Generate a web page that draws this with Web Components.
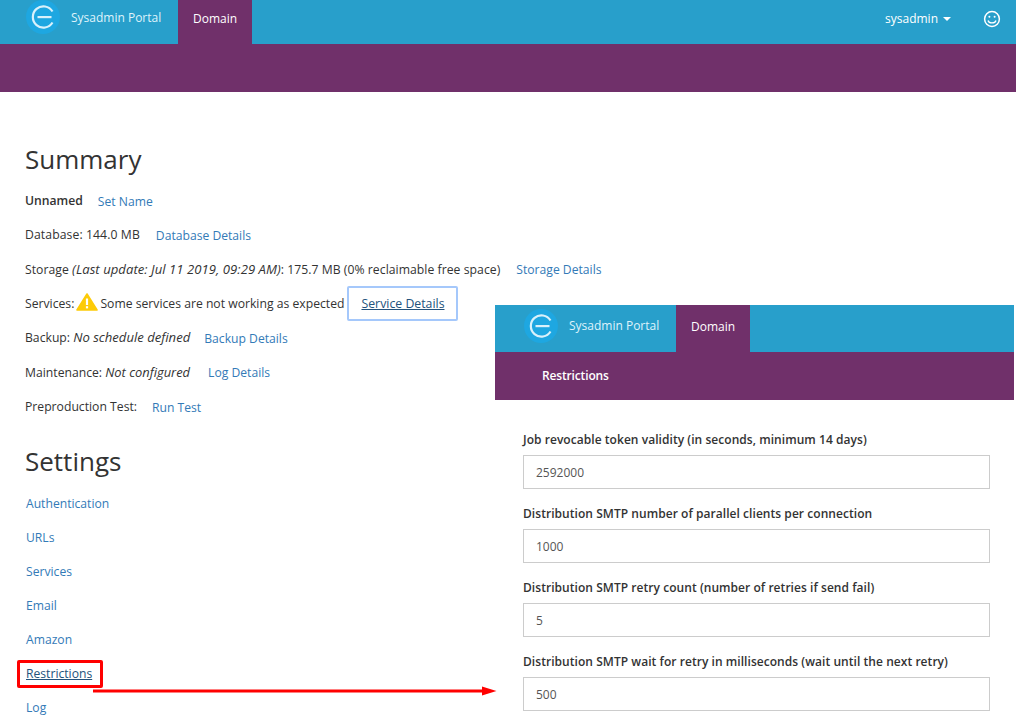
<!DOCTYPE html>
<html>
<head>
<meta charset="utf-8">
<title>Sysadmin Portal</title>
<style>
html, body { margin: 0; height: 725px; overflow: hidden; background: #fff; }
body { font-family: "Open Sans", sans-serif; font-size: 12px; color: #333; position: relative; }
</style>
</head>
<body>
<template id="portal-header-template">
  <style>
    :host { display: block; font-family: "Open Sans", sans-serif; }
    .top { display: flex; height: 44px; background: #289fcb; color: #fff; }
    .logo { width: 34px; height: 34px; margin: 0 0 10px 26px; flex: none; }
    .name { margin-left: 11px; padding-top: 10px; font-size: 12px; line-height: 16px; color: #dff3fb; width: 107px; white-space: nowrap; }
    .tab { width: 74px; background: #70306a; font-size: 12px; line-height: 17px; padding-top: 10px; text-align: center; box-sizing: border-box; }
    .right { margin-left: auto; display: flex; }
    .sub { height: 48px; background: #70306a; color: #fff; font-size: 12px; line-height: 48px; padding-left: 47px; font-weight: 600; letter-spacing: -0.15px; }
    :host([compact]) .top { height: 47px; }
    :host([compact]) .logo { margin-left: 29px; margin-top: 4px; margin-bottom: 9px; }
    :host([compact]) .name { padding-top: 13px; }
    :host([compact]) .tab { padding-top: 13px; }
  </style>
  <div class="top">
    <svg class="logo" viewBox="0 0 34 34">
      <circle cx="17" cy="17" r="17" fill="#1ea7e1"/>
      <path d="M26.5 11.5A10.6 10.6 0 1 0 26.5 22.5" fill="none" stroke="#d9f1fb" stroke-width="2.2"/>
      <rect x="11.5" y="16" width="14" height="2.2" fill="#d9f1fb"/>
    </svg>
    <span class="name">Sysadmin Portal</span>
    <span class="tab">Domain</span>
    <div class="right"><slot name="right"></slot></div>
  </div>
  <div class="sub"><slot></slot></div>
</template>

<template id="user-menu-template">
  <style>
    :host { display: flex; height: 44px; font-family: "Open Sans", sans-serif; color: #fff; font-size: 12px; }
    .user { margin-top: 10px; line-height: 17px; }
    .caret { display: inline-block; width: 0; height: 0; border: 4px solid transparent; border-top-color: #fff; border-bottom: 0; margin-left: 5px; vertical-align: 2px; }
    svg { width: 18px; height: 18px; margin: 10px 15px 0 32px; }
  </style>
  <span class="user">sysadmin<span class="caret"></span></span>
  <svg viewBox="0 0 18 18" fill="none" stroke="#fff" stroke-width="1.5">
    <circle cx="9" cy="9" r="7.4"/>
    <circle cx="6.4" cy="6.8" r="1" fill="#fff" stroke="none"/>
    <circle cx="11.6" cy="6.8" r="1" fill="#fff" stroke="none"/>
    <path d="M5 10.5c1 3.2 7 3.2 8 0" stroke-width="1.3"/>
  </svg>
</template>

<template id="info-row-template">
  <style>
    :host { display: flex; align-items: center; height: 34.33px; font-family: "Open Sans", sans-serif; font-size: 12.2px; color: #333; white-space: nowrap; }
  </style>
  <slot></slot>
</template>

<template id="summary-panel-template">
  <style>
    :host { display: block; padding: 49px 0 0 25px; font-family: "Open Sans", sans-serif; }
    h2 { margin: 0; font-size: 26px; line-height: 36px; font-weight: 400; color: #333; }
    .rows { margin-top: 6px; }
    h2.settings { margin-top: 20px; }
    .links { margin-top: 8px; margin-left: 1px; display: flex; flex-direction: column; }
    .links a { display: block; height: 34px; line-height: 34px; font-size: 12.15px; color: #337ab7; text-decoration: none; }
    .links a.on { text-decoration: underline; color: #23527c; position: relative; }
    .links a.on::after { content: ""; position: absolute; left: -9px; top: 3px; width: 80px; height: 22px; border: 3px solid #f00; border-radius: 2px; box-sizing: content-box; }
    a.l { color: #337ab7; margin-left: 16px; padding-top: 2px; font-size: 12.15px; text-decoration: none; }
    a.l.near { margin-left: 14px; }
    a.l.far { margin-left: 18px; }
    a.l.short { margin-left: 15px; }
    .warn { width: 22px; height: 18px; margin: 0 2px 3px 2px; flex: none; }
    .focus { border: 2px solid #a5c8fb; border-radius: 2px; padding: 0 12px; line-height: 31px; box-sizing: border-box; margin: 1px 0 0 3px; color: #23527c; text-decoration: underline; font-size: 12.3px; width: 111px; height: 35px; white-space: nowrap; }
    span { white-space: pre; }
    span.wide { letter-spacing: 0.1px; }
    span.storage { letter-spacing: 0.045px; }
    em { font-style: italic; font-size: 13.1px; }
    em.tight { font-size: 12.9px; }
    b { font-weight: 600; }
  </style>
  <h2>Summary</h2>
  <div class="rows">
    <info-row><b>Unnamed</b><a class="l short" href="#">Set Name</a></info-row>
    <info-row><span class="wide">Database: 144.0 MB</span><a class="l" href="#">Database Details</a></info-row>
    <info-row><span class="storage">Storage <em>(Last update: Jul 11 2019, 09:29 AM)</em>: 175.7 MB (0% reclaimable free space)</span><a class="l" href="#">Storage Details</a></info-row>
    <info-row><span>Services:</span>
      <svg class="warn" viewBox="0 0 22 18"><path d="M11 1 21 17H1Z" fill="#fdcb08" stroke="#fdcb08" stroke-width="1.6" stroke-linejoin="round"/><rect x="9.9" y="5.5" width="2.2" height="6.5" fill="#fff"/><rect x="9.9" y="13.2" width="2.2" height="2.2" fill="#fff"/></svg>
      <span>Some services are not working as expected</span><a class="focus" href="#">Service Details</a></info-row>
    <info-row><span>Backup: <em>No schedule defined</em></span><a class="l near" href="#">Backup Details</a></info-row>
    <info-row><span>Maintenance: <em class="tight">Not configured</em></span><a class="l far" href="#">Log Details</a></info-row>
    <info-row><span>Preproduction Test:</span><a class="l short" href="#">Run Test</a></info-row>
  </div>
  <h2 class="settings">Settings</h2>
  <div class="links">
    <a href="#">Authentication</a>
    <a href="#">URLs</a>
    <a href="#">Services</a>
    <a href="#">Email</a>
    <a href="#">Amazon</a>
    <a class="on" href="#">Restrictions</a>
    <a href="#">Log</a>
  </div>
</template>

<template id="restrictions-panel-template">
  <style>
    :host { display: block; position: absolute; left: 495px; top: 305px; width: 519px; height: 420px; background: #fff; overflow: hidden; font-family: "Open Sans", sans-serif; }
    form { padding: 30px 24px 0 28px; }
  </style>
  <portal-header compact>Restrictions</portal-header>
  <form>
    <setting-field label="Job revocable token validity (in seconds, minimum 14 days)" value="2592000"></setting-field>
    <setting-field label="Distribution SMTP number of parallel clients per connection" value="1000"></setting-field>
    <setting-field label="Distribution SMTP retry count (number of retries if send fail)" value="5"></setting-field>
    <setting-field label="Distribution SMTP wait for retry in milliseconds (wait until the next retry)" value="500"></setting-field>
  </form>
</template>

<template id="setting-field-template">
  <style>
    :host { display: block; height: 74px; font-family: "Open Sans", sans-serif; }
    label { display: block; font-size: 12px; font-weight: 600; line-height: 17px; color: #333; padding-top: 1px; margin-bottom: 7px; letter-spacing: 0.05px; white-space: nowrap; }
    input { display: block; width: 100%; height: 34px; box-sizing: border-box; border: 1px solid #ccc; padding: 0 12px; font: 12px "Open Sans", sans-serif; color: #555; outline: 0; }
  </style>
  <label></label>
  <input type="text">
</template>

<portal-header>
  <user-menu slot="right"></user-menu>
</portal-header>
<summary-panel></summary-panel>
<restrictions-panel></restrictions-panel>
<flow-arrow></flow-arrow>

<script>
function stamp(el, id) {
    const root = el.attachShadow({ mode: 'open' });
    root.appendChild(document.getElementById(id).content.cloneNode(true));
    return root;
}

class PortalHeader extends HTMLElement {
    constructor() { super(); stamp(this, 'portal-header-template'); }
}
class UserMenu extends HTMLElement {
    constructor() { super(); stamp(this, 'user-menu-template'); }
}
class InfoRow extends HTMLElement {
    constructor() { super(); stamp(this, 'info-row-template'); }
}
class SummaryPanel extends HTMLElement {
    constructor() { super(); stamp(this, 'summary-panel-template'); }
}
class RestrictionsPanel extends HTMLElement {
    constructor() { super(); stamp(this, 'restrictions-panel-template'); }
}
class SettingField extends HTMLElement {
    constructor() { super(); this._root = stamp(this, 'setting-field-template'); }
    connectedCallback() {
        this._root.querySelector('label').textContent = this.getAttribute('label');
        this._root.querySelector('input').setAttribute('value', this.getAttribute('value'));
    }
}
// red annotation arrow, sits over the page
class FlowArrow extends HTMLElement {
    constructor() {
        super();
        this.attachShadow({ mode: 'open' }).innerHTML = `
        <style>
        :host { display: block; position: absolute; left: 90px; top: 684px; width: 410px; height: 14px; }
        svg { display: block; }
        </style>
        <svg width="410" height="14" viewBox="0 0 410 14">
          <rect x="3" y="5.5" width="392" height="3" fill="#f00"/>
          <path d="M392 2.5 406.5 7 392 11.5Z" fill="#f00"/>
        </svg>`;
    }
}
customElements.define('portal-header', PortalHeader);
customElements.define('user-menu', UserMenu);
customElements.define('info-row', InfoRow);
customElements.define('summary-panel', SummaryPanel);
customElements.define('setting-field', SettingField);
customElements.define('restrictions-panel', RestrictionsPanel);
customElements.define('flow-arrow', FlowArrow);
</script>
</body>
</html>
